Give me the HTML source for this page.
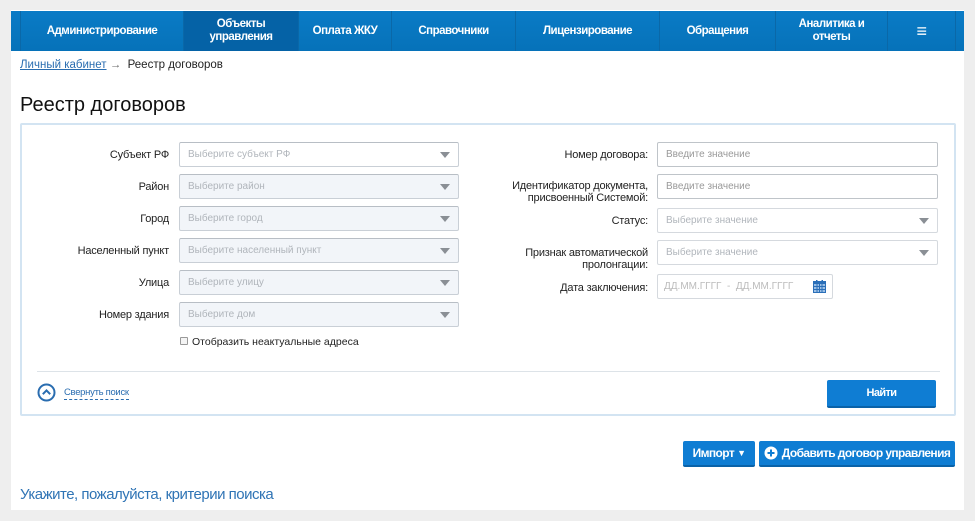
<!DOCTYPE html>
<html><head><meta charset="utf-8"><style>
*{box-sizing:border-box;margin:0;padding:0}
body{width:975px;height:521px;background:#eeeeee;font-family:"Liberation Sans",sans-serif;position:relative;overflow:hidden}
.page{position:absolute;left:11px;top:10px;width:953px;height:500px;background:#fff}
.nav{position:absolute;left:11px;top:11px;width:953px;height:40px;background:linear-gradient(#0a7bc6,#0672b9)}
.ni{position:absolute;top:0;height:40px;display:flex;align-items:center;justify-content:center;text-align:center;color:#fff;font-weight:bold;font-size:11.5px;line-height:13px;border-left:1px solid #0a68a8;letter-spacing:-0.5px;white-space:nowrap}
.ni.act{background:#0562a6}
.abs{position:absolute}
.lbl{position:absolute;font-size:11px;color:#222;text-align:right;line-height:12px;letter-spacing:-0.2px}
.sel{position:absolute;height:25px;border:1px solid #c9cfd6;border-top-color:#b8bec5;border-radius:2px;font-size:10px;color:#b0b5bb;padding-left:8px;line-height:24px;white-space:nowrap}
.sel.dis{background:#f2f5f9}
.sel .ar{position:absolute;right:8px;top:9px;width:0;height:0;border-left:5px solid transparent;border-right:5px solid transparent;border-top:6px solid #8a8f95}
.btn{position:absolute;background:#0f7dd3;color:#fff;font-weight:bold;font-size:12px;display:flex;align-items:center;justify-content:center;border-radius:2px;border-bottom:2px solid #0a62a8;white-space:nowrap;letter-spacing:-0.6px}
</style></head><body>
<div class="page"></div>
<div class="nav">
<div class="ni" style="left:9px;width:163px">Администрирование</div>
<div class="ni act" style="left:172px;width:115px">Объекты<br>управления</div>
<div class="ni" style="left:287px;width:93px">Оплата ЖКУ</div>
<div class="ni" style="left:380px;width:124px">Справочники</div>
<div class="ni" style="left:504px;width:144px">Лицензирование</div>
<div class="ni" style="left:648px;width:116px">Обращения</div>
<div class="ni" style="left:764px;width:112px">Аналитика и<br>отчеты</div>
<div class="ni" style="left:876px;width:68px;font-size:18px">≡</div>
<div class="ni" style="left:944px;width:9px"></div>
</div>
<div class="abs" style="left:20px;top:59px;font-size:11.5px;color:#222"><span style="color:#2a6db0;text-decoration:underline">Личный кабинет</span> <span style="color:#666">→</span>&nbsp; Реестр договоров</div>
<div class="abs" style="left:20px;top:94px;font-size:20px;color:#111">Реестр договоров</div>
<div class="abs" style="left:20px;top:123px;width:936px;height:293px;border:2px solid #d3e4f2;border-radius:2px"></div>

<div class="lbl" style="left:50px;width:119px;top:149px">Субъект РФ</div>
<div class="lbl" style="left:50px;width:119px;top:181px">Район</div>
<div class="lbl" style="left:50px;width:119px;top:213px">Город</div>
<div class="lbl" style="left:30px;width:139px;top:245px">Населенный пункт</div>
<div class="lbl" style="left:50px;width:119px;top:277px">Улица</div>
<div class="lbl" style="left:50px;width:119px;top:309px">Номер здания</div>
<div class="sel" style="left:179px;top:142px;width:280px">Выберите субъект РФ<div class="ar"></div></div>
<div class="sel dis" style="left:179px;top:174px;width:280px">Выберите район<div class="ar"></div></div>
<div class="sel dis" style="left:179px;top:206px;width:280px">Выберите город<div class="ar"></div></div>
<div class="sel dis" style="left:179px;top:238px;width:280px">Выберите населенный пункт<div class="ar"></div></div>
<div class="sel dis" style="left:179px;top:270px;width:280px">Выберите улицу<div class="ar"></div></div>
<div class="sel dis" style="left:179px;top:302px;width:280px">Выберите дом<div class="ar"></div></div>
<div class="abs" style="left:180px;top:337px;width:8px;height:8px;border:1px solid #999;border-radius:1px;background:#f4f4f4"></div>
<div class="abs" style="left:192px;top:336px;font-size:10.5px;color:#222">Отобразить неактуальные адреса</div>

<div class="lbl" style="left:490px;width:158px;top:149px">Номер договора:</div>
<div class="lbl" style="left:480px;width:168px;top:180px">Идентификатор документа,<br>присвоенный Системой:</div>
<div class="lbl" style="left:490px;width:158px;top:215px">Статус:</div>
<div class="lbl" style="left:490px;width:158px;top:247px">Признак автоматической<br>пролонгации:</div>
<div class="lbl" style="left:490px;width:158px;top:282px">Дата заключения:</div>
<div class="sel" style="left:657px;top:142px;width:281px;color:#999;border-color:#bfc4c9">Введите значение</div>
<div class="sel" style="left:657px;top:174px;width:281px;color:#999;border-color:#bfc4c9">Введите значение</div>
<div class="sel" style="left:657px;top:208px;width:281px;border-color:#d5d9de">Выберите значение<div class="ar"></div></div>
<div class="sel" style="left:657px;top:240px;width:281px;border-color:#d5d9de">Выберите значение<div class="ar"></div></div>
<div class="sel" style="left:657px;top:274px;width:176px;border-color:#d5d9de;padding-left:6px;color:#bbb">ДД.ММ.ГГГГ&nbsp; - &nbsp;ДД.ММ.ГГГГ
<svg class="abs" style="right:6px;top:5px" width="13" height="13" viewBox="0 0 13 13"><rect x="0" y="1" width="13" height="12" fill="#2b6fb8"/><rect x="1" y="4" width="11" height="8" fill="#9cc0e6"/><g fill="#2b6fb8"><rect x="1" y="6" width="11" height="1"/><rect x="1" y="9" width="11" height="1"/><rect x="3.5" y="4" width="1" height="8"/><rect x="6" y="4" width="1" height="8"/><rect x="8.5" y="4" width="1" height="8"/></g><rect x="3" y="0" width="1.5" height="2" fill="#2b6fb8"/><rect x="8.5" y="0" width="1.5" height="2" fill="#2b6fb8"/></svg></div>

<div class="abs" style="left:37px;top:371px;width:903px;height:1px;background:#dde3e8"></div>
<svg class="abs" style="left:37px;top:383px" width="19" height="19" viewBox="0 0 19 19"><circle cx="9.5" cy="9.5" r="8" fill="none" stroke="#2a6db0" stroke-width="2"/><path d="M5.8 11.2 L9.5 7.4 L13.2 11.2" fill="none" stroke="#2a6db0" stroke-width="2"/></svg>
<div class="abs" style="left:64px;top:387px;font-size:9.5px;color:#2a6db0;border-bottom:1px dashed #2a6db0;padding-bottom:1px;letter-spacing:-0.3px">Свернуть поиск</div>
<div class="btn" style="left:827px;top:380px;width:109px;height:28px;font-size:11px">Найти</div>

<div class="btn" style="left:683px;top:441px;width:72px;height:26px">Импорт <span style="font-size:9px;margin-left:3px">▼</span></div>
<div class="btn" style="left:759px;top:441px;width:196px;height:26px"><svg width="14" height="14" viewBox="0 0 14 14" style="margin-right:4px"><circle cx="7" cy="7" r="6.5" fill="#fff"/><path d="M7 3.5V10.5M3.5 7H10.5" stroke="#0f7dd3" stroke-width="2"/></svg>Добавить договор управления</div>
<div class="abs" style="left:20px;top:486px;font-size:15px;color:#2f74b5;letter-spacing:-0.5px">Укажите, пожалуйста, критерии поиска</div>
</body></html>
